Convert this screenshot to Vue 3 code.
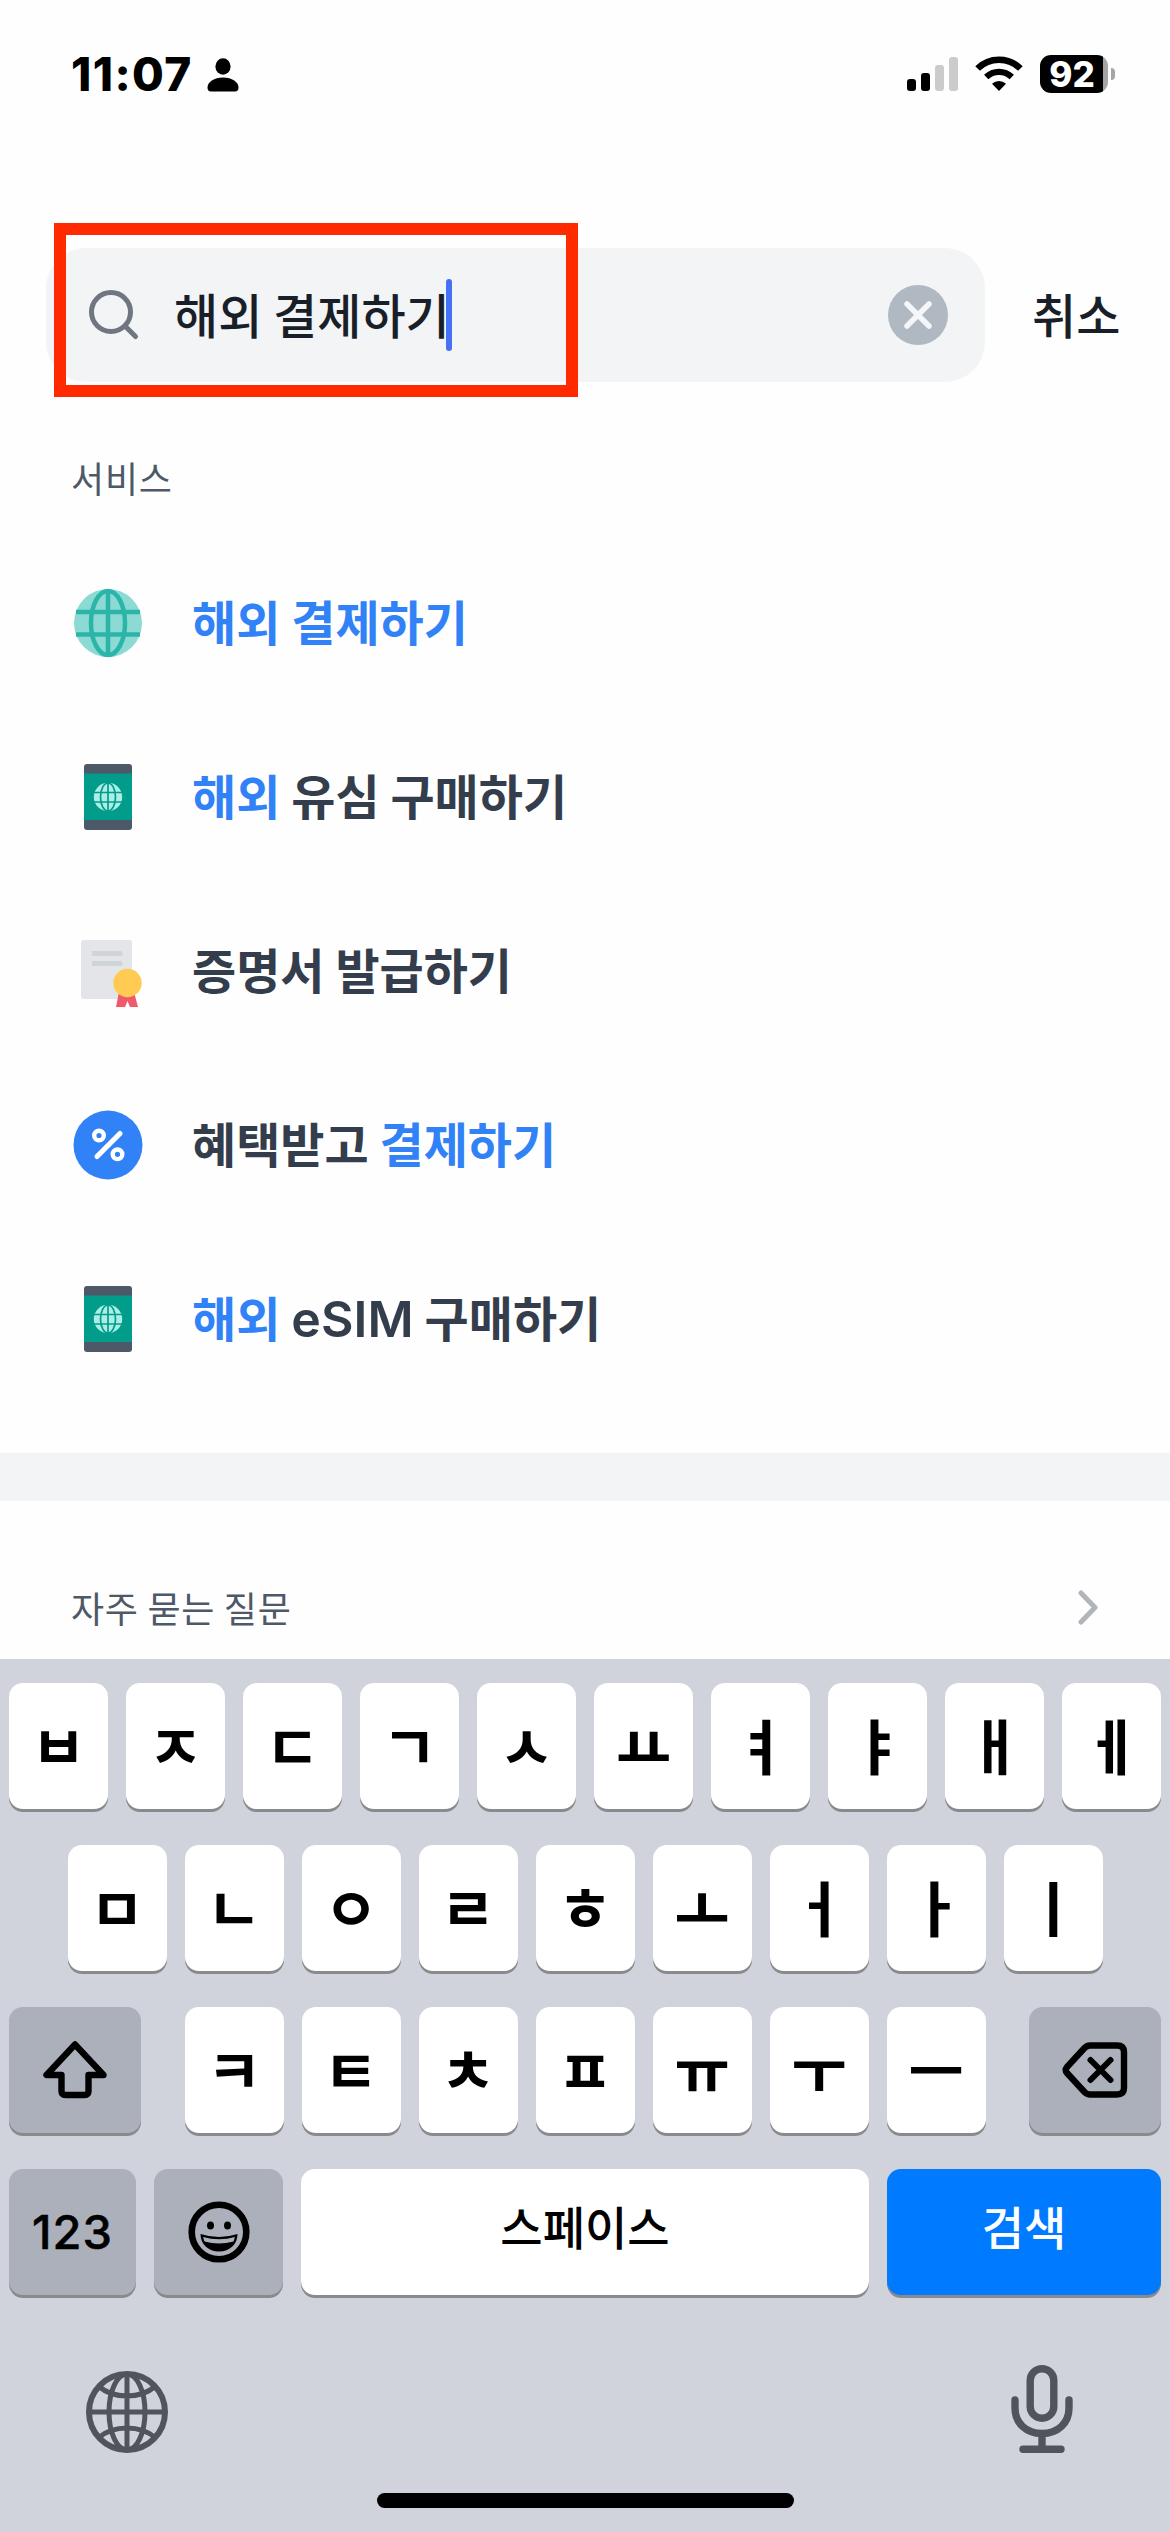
<script setup>
const services = [
  { icon: 'globe', parts: [{ t: '해외 결제하기', hit: true }] },
  { icon: 'phone', parts: [{ t: '해외', hit: true }, { t: ' 유심 구매하기' }] },
  { icon: 'certificate', parts: [{ t: '증명서 발급하기' }] },
  { icon: 'percent', parts: [{ t: '혜택받고 ' }, { t: '결제하기', hit: true }] },
  { icon: 'phone', parts: [{ t: '해외', hit: true }, { t: ' ' }, { t: 'eSIM', latin: true }, { t: ' 구매하기' }] },
]
const row1 = ['ㅂ', 'ㅈ', 'ㄷ', 'ㄱ', 'ㅅ', 'ㅛ', 'ㅕ', 'ㅑ', 'ㅐ', 'ㅔ']
const row2 = ['ㅁ', 'ㄴ', 'ㅇ', 'ㄹ', 'ㅎ', 'ㅗ', 'ㅓ', 'ㅏ', 'ㅣ']
const row3 = ['ㅋ', 'ㅌ', 'ㅊ', 'ㅍ', 'ㅠ', 'ㅜ', 'ㅡ']
</script>

<template>
  <div class="screen">
    <header class="status">
      <span class="time">11:07</span>
      <svg class="person" viewBox="0 0 32 34">
        <ellipse cx="16" cy="8.5" rx="7.6" ry="8.3" />
        <path d="M0.5 29.5C0.5 24 7 19.5 16 19.5S31.500 24 31.500 29.500Q31.500 33.500 28 33.500H4Q0.500 33.500 0.500 29.500Z" />
      </svg>
      <svg class="signal" viewBox="0 0 51 34">
        <rect x="0" y="22" width="9" height="12" rx="3" />
        <rect x="14" y="16" width="9" height="18" rx="3" />
        <rect x="28" y="8" width="9" height="26" rx="3" fill="#cbcbcb" />
        <rect x="42" y="0" width="9" height="34" rx="3" fill="#cbcbcb" />
      </svg>
      <svg class="wifi" viewBox="0 0 48 36">
        <path d="M2.600 13.500A30.500 30.500 0 0 1 45.400 13.500" fill="none" stroke="#000" stroke-width="6.600" />
        <path d="M11.200 22A18.500 18.500 0 0 1 36.800 22" fill="none" stroke="#000" stroke-width="6.200" />
        <path d="M24 36L17 28.800A10 10 0 0 1 31 28.800Z" />
      </svg>
      <div class="battery">
        <div class="cell">92</div>
        <div class="nub"></div>
      </div>
    </header>

    <div class="search-row">
      <div class="search">
        <svg class="mag" viewBox="0 0 52 52" fill="none" stroke="#6f7680" stroke-width="5" stroke-linecap="round">
          <circle cx="23" cy="23" r="19.500" />
          <path d="M37 37L47.500 47.500" />
        </svg>
        <span class="query">해외 결제하기</span>
        <i class="caret"></i>
        <svg class="clear" viewBox="0 0 60 60">
          <circle cx="30" cy="30" r="30" fill="#b0b8c1" />
          <path d="M19 19L41 41M41 19L19 41" stroke="#f4f6fa" stroke-width="5.500" stroke-linecap="round" />
        </svg>
        <div class="marker"></div>
      </div>
      <span class="cancel">취소</span>
    </div>

    <h2 class="section">서비스</h2>
    <ul class="list">
      <li v-for="(s, i) in services" :key="i" class="item">
        <svg class="icon" viewBox="0 0 70 70">
          <template v-if="s.icon === 'globe'">
            <circle cx="35" cy="35" r="34" fill="#8bdad3" />
            <g fill="none" stroke="#2bb5a8" stroke-width="4.500">
              <path d="M35 2V68M3 24H67M3 46.500H67" />
              <ellipse cx="35" cy="35" rx="17" ry="32" />
            </g>
          </template>
          <template v-else-if="s.icon === 'phone'">
            <rect x="11" y="2" width="48" height="66" rx="3" fill="#4e5968" />
            <rect x="11" y="11.500" width="48" height="46.500" fill="#029c8b" />
            <circle cx="35" cy="35" r="14.200" fill="#aaeee7" />
            <g fill="none" stroke="#029c8b" stroke-width="1.700">
              <path d="M35 20V50M20 30.500H50M20 40H50" />
              <ellipse cx="35" cy="35" rx="7.500" ry="14" />
            </g>
          </template>
          <template v-else-if="s.icon === 'certificate'">
            <rect x="8" y="4" width="51" height="59" rx="2.500" fill="#e3e5e9" />
            <path d="M19 15H48L49.500 17.500V20H19ZM19 25H48L49.500 27V30H19Z" fill="#cfd4d8" />
            <path d="M46 56L43 71H52L54.500 65L57 71H65L61 56Z" fill="#f0596b" />
            <circle cx="54.500" cy="47" r="14.200" fill="#ffcb53" />
          </template>
          <template v-else>
            <circle cx="35" cy="35" r="34.500" fill="#3182f6" />
            <path d="M47 23.500L24 46.500" stroke="#fff" stroke-width="5.200" stroke-linecap="round" />
            <g fill="none" stroke="#fff" stroke-width="4.400">
              <circle cx="26" cy="25.500" r="4.800" />
              <circle cx="44.500" cy="44.300" r="4.800" />
            </g>
          </template>
        </svg>
        <span class="label"><span v-for="(p, j) in s.parts" :key="j" :class="{ hit: p.hit, latin: p.latin }">{{ p.t }}</span></span>
      </li>
    </ul>

    <div class="band"></div>
    <div class="faq">
      <span>자주 묻는 질문</span>
      <svg class="chev" viewBox="0 0 20 35" fill="none" stroke="#b1b5b9" stroke-width="5" stroke-linecap="round" stroke-linejoin="round">
        <path d="M3 3L17 17.500L3 32" />
      </svg>
    </div>

    <div class="keyboard">
      <div class="krow"><div v-for="k in row1" :key="k" class="key"><span class="jamo">{{ k }}</span></div></div>
      <div class="krow"><div v-for="k in row2" :key="k" class="key"><span class="jamo">{{ k }}</span></div></div>
      <div class="krow spread">
        <div class="key dark shift">
          <svg width="66" height="58" viewBox="0 0 66 58" fill="none" stroke="#000" stroke-width="6.400" stroke-linejoin="round">
            <path d="M33 3.500L4.500 34H19.500V50Q19.500 54 23.500 54H42.500Q46.500 54 46.500 50V34H61.500Z" />
          </svg>
        </div>
        <div class="mid"><div v-for="k in row3" :key="k" class="key"><span class="jamo">{{ k }}</span></div></div>
        <div class="key dark shift">
          <svg width="66" height="56" viewBox="0 0 66 56" fill="none" stroke="#000" stroke-width="6.400" stroke-linejoin="round" stroke-linecap="round">
            <path d="M28 3.500H55Q62 3.500 62 10V46Q62 52.500 55 52.500H28Q25 52.500 22.500 50L5 31Q2.500 28 5 25L22.500 6Q25 3.500 28 3.500Z" />
            <path d="M28.500 18L48.500 38M48.500 18L28.500 38" stroke-width="6" />
          </svg>
        </div>
      </div>
      <div class="krow">
        <div class="key dark num">123</div>
        <div class="key dark emo">
          <svg width="62" height="62" viewBox="0 0 62 62">
            <circle cx="31" cy="31" r="27.300" fill="none" stroke="#000" stroke-width="6.600" />
            <ellipse cx="22.500" cy="24.500" rx="3.500" ry="4" />
            <ellipse cx="39.500" cy="24.500" rx="3.500" ry="4" />
            <path d="M12.500 33Q31 39 49.500 33C49.500 43 42 50.500 31 50.500S12.500 43 12.500 33Z" />
            <path d="M15 36Q31 40.500 47 36L45.500 40.500Q31 44.500 16.500 40.500Z" fill="#abb0bb" />
          </svg>
        </div>
        <div class="key space"><span class="word">스페이스</span></div>
        <div class="key go"><span class="word">검색</span></div>
      </div>
      <div class="tools">
        <svg width="82" height="82" viewBox="0 0 82 82" fill="none" stroke="#50555c" stroke-width="5">
          <circle cx="41" cy="41" r="38" stroke-width="6" />
          <ellipse cx="41" cy="41" rx="18" ry="38" />
          <path d="M41 3V79M3 41H79M13 15.500Q24 25 41 25T69 15.500M13 66.500Q24 57 41 57T69 66.500" />
        </svg>
        <svg width="62" height="88" viewBox="0 0 62 88" fill="none" stroke="#50555c" stroke-width="7.400" stroke-linecap="round">
          <rect x="19.200" y="3.700" width="23.600" height="49.500" rx="11.800" />
          <path d="M4 35V43C4 58 15 68.500 31 68.500S58 58 58 43V35M31 69V83M12 84.200H50" />
        </svg>
      </div>
      <div class="home"></div>
    </div>
  </div>
</template>

<style>
body { margin: 0; background: #fff; }
</style>

<style scoped>
.screen {
  width: 1170px; height: 2532px; display: flex; flex-direction: column; overflow: hidden;
  background: #fefefe; font-family: "Noto Sans CJK KR", sans-serif;
}
.screen * { box-sizing: border-box; }
svg { display: block; flex: none; }
.status { height: 148px; padding: 0 55px 0 71px; display: flex; align-items: center; }
.time { font: 800 46px/60px Inter, sans-serif; letter-spacing: 1.4px; width: 136px; }
.person { width: 32px; height: 34px; margin-top: 1px; }
.signal { width: 51px; height: 34px; margin-left: auto; }
.wifi { width: 48px; height: 36px; margin-left: 17px; margin-top: -2px; }
.battery { display: flex; align-items: center; margin-left: 17px; }
.cell {
  width: 68px; height: 38px; border-radius: 11px; padding-right: 4px;
  background: linear-gradient(90deg, #000 63px, #a5a5a5 63px);
  color: #fff; font: 800 35px/38px Inter, sans-serif; text-align: center;
}
.nub { width: 4px; height: 12px; margin-left: 3px; background: #a5a5a5; border-radius: 0 4px 4px 0; }

.search-row { margin-top: 100px; padding-left: 46px; display: flex; height: 134px; align-items: center; }
.search {
  position: relative; width: 939px; height: 134px; border-radius: 40px; background: #f2f4f6;
  display: flex; align-items: center; padding: 0 37px 0 42px;
}
.mag { width: 52px; height: 52px; }
.query { margin-left: 34px; width: 272px; padding-bottom: 4px; font-size: 48px; font-weight: 500; line-height: 60px; color: #191f28; white-space: nowrap; }
.caret { width: 6px; height: 72px; border-radius: 3px; background: #4770f5; }
.clear { width: 60px; height: 60px; margin-left: auto; }
.marker { position: absolute; left: 8px; top: -25px; width: 524px; height: 174px; border: 12.500px solid #ff2a00; }
.cancel { margin-left: 47px; padding-bottom: 4px; font-size: 48px; font-weight: 500; line-height: 60px; color: #191f28; }

.section { margin: 65px 0 0 71px; height: 60px; font-size: 36px; font-weight: 400; line-height: 60px; letter-spacing: 0.8px; color: #4e5968; }
.list { margin: 29px 0 0; padding: 0; list-style: none; }
.item { height: 174px; display: flex; align-items: center; padding-left: 73px; }
.icon { width: 70px; height: 70px; overflow: visible; }
.label { margin-left: 49px; padding-bottom: 6px; font-size: 48px; font-weight: 700; line-height: 60px; color: #333d4b; white-space: pre; }
.hit { color: #3182f6; }
.latin { font-family: Inter, sans-serif; font-size: 50px; font-weight: 600; line-height: 1; letter-spacing: 0.1px; }

.band { margin-top: 47px; height: 48px; background: #f2f4f6; }
.faq {
  height: 158px; padding: 55px 72px 0 71px; display: flex; align-items: center; justify-content: space-between;
  font-size: 36px; line-height: 60px; letter-spacing: 0.7px; color: #4e5968;
}
.faq span { padding-bottom: 2px; }
.chev { width: 20px; height: 35px; }

.keyboard { flex: 1; background: #d0d3db; padding: 24px 9px 0; display: flex; flex-direction: column; }
.krow { display: flex; justify-content: center; gap: 18px; height: 126px; margin-bottom: 36px; }
.spread { justify-content: space-between; }
.mid { display: flex; gap: 18px; }
.key {
  width: 99px; height: 126px; border-radius: 14px; background: #fff; box-shadow: 0 3px 0 #898a8d;
  display: flex; align-items: center; justify-content: center; color: #000; flex: none;
}
.jamo { font-size: 60px; font-weight: 700; line-height: 60px; padding-bottom: 5px; }
.dark { background: #abb0bb; }
.shift { width: 132px; }
.num { width: 127px; font: 500 47px/60px Inter, sans-serif; letter-spacing: 1px; -webkit-text-stroke: 0.5px #000; }
.emo { width: 129px; }
.space { width: 568px; }
.go { width: 274px; background: #007aff; color: #fff; }
.word { font-size: 46px; font-weight: 500; line-height: 60px; padding-bottom: 14px; }
.tools { display: flex; justify-content: space-between; align-items: flex-end; height: 122px; padding: 0 88px 0 77px; }
.home { width: 417px; height: 15px; border-radius: 8px; background: #000; margin: 40px auto 0; }
</style>
